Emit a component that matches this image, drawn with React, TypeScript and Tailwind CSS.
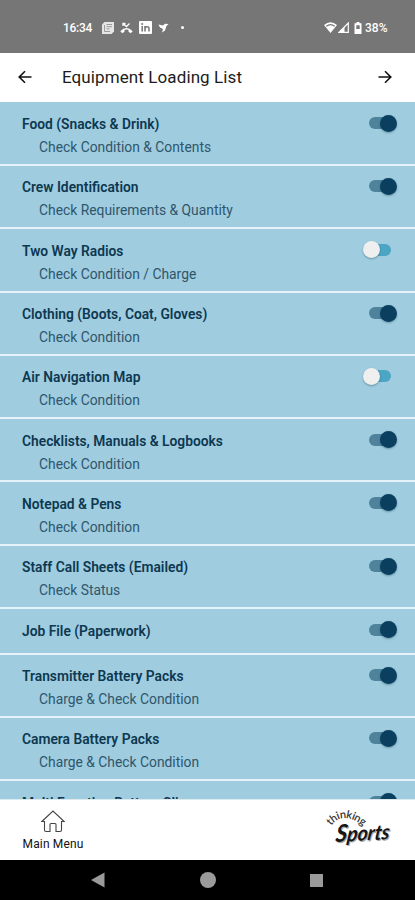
import { clsx } from "clsx";

interface Item {
  title: string;
  note?: string;
  on: boolean;
}

const ITEMS: Item[] = [
  { title: "Food (Snacks & Drink)", note: "Check Condition & Contents", on: true },
  { title: "Crew Identification", note: "Check Requirements & Quantity", on: true },
  { title: "Two Way Radios", note: "Check Condition / Charge", on: false },
  { title: "Clothing (Boots, Coat, Gloves)", note: "Check Condition", on: true },
  { title: "Air Navigation Map", note: "Check Condition", on: false },
  { title: "Checklists, Manuals & Logbooks", note: "Check Condition", on: true },
  { title: "Notepad & Pens", note: "Check Condition", on: true },
  { title: "Staff Call Sheets (Emailed)", note: "Check Status", on: true },
  { title: "Job File (Paperwork)", on: true },
  { title: "Transmitter Battery Packs", note: "Charge & Check Condition", on: true },
  { title: "Camera Battery Packs", note: "Charge & Check Condition", on: true },
  { title: "Multi Function Battery Clips", on: true },
];

function StatusBar() {
  return (
    <div className="flex h-[53px] shrink-0 items-center bg-[#767676] pl-[63px] pr-[26px] pt-[2px] text-[12px] font-medium text-white">
      <span className="w-[29px] tracking-[-0.3px]">16:34</span>
      <svg className="ml-[10px]" width="12" height="12" viewBox="0 0 12 12">
        <path d="M2.500 0H12v9.500L9.500 12H0V2.500Z" fill="#e6e6e6" />
        <path d="M4.500 2.500h5.500M4.500 4.700h5.500M4.500 6.900h3M2.500 3v6.500H8" stroke="#9a9a9a" fill="none" />
      </svg>
      <svg className="ml-[6px]" width="13" height="12" viewBox="0 0 13 12">
        <path d="M3 1.500 6.500 4.500 9.500 1.500M3 4V1.500h2.500" stroke="#fff" strokeWidth="1.300" fill="none" />
        <path d="M.3 9.300Q6.500 2.800 12.700 9.300L10.700 11.200 8.500 9.800V7.800Q6.500 7 4.500 7.800v2L2.300 11.200Z" fill="#fff" />
      </svg>
      <svg className="ml-[6px]" width="13" height="13" viewBox="0 0 13 13">
        <rect width="13" height="13" rx="1" fill="#fff" />
        <path d="M3.200 5v5.500M6 5v5.500M6 7.500C6.500 5 10 5 10 7.500v3" stroke="#767676" strokeWidth="1.500" fill="none" />
        <circle cx="3.200" cy="3" r="1" fill="#767676" />
      </svg>
      <svg className="ml-[6px]" width="11" height="10" viewBox="0 0 11 10">
        <path d="M.5 1.500 5 2.500 7 .8 10.500 1 8.500 3 7 7.500 4 9.500 5 6 2 4.500Z" fill="#fff" />
      </svg>
      <span className="ml-[12px] size-[3px] rounded-full bg-white" />
      <svg className="ml-auto" width="13" height="11" viewBox="0 0 13 11">
        <path d="M0 3Q6.500-2.500 13 3L6.500 11Z" fill="#fff" />
        <path d="M2.300 4.300Q6.500 1 10.700 4.300" stroke="#767676" strokeWidth="1.100" fill="none" />
      </svg>
      <svg className="ml-[1px]" width="11" height="11" viewBox="0 0 11 11">
        <path d="M10.300 1v9.300H1Z" fill="none" stroke="#fff" strokeWidth="1.200" />
        <path d="M6.500 4.700v5.600H1Z" fill="#fff" />
      </svg>
      <svg className="ml-[5px]" width="8" height="12" viewBox="0 0 8 12">
        <path d="M2.500 0h3v1.300H7.500V12H.5V1.300h2Z" fill="#fff" />
        <path d="M2.300 3.300h3.400v3.700H2.300Z" fill="#767676" />
      </svg>
      <span className="ml-[3px] w-[24px] whitespace-nowrap">38%</span>
    </div>
  );
}

function Arrow({ flip = false }: { flip?: boolean }) {
  return (
    <svg className={clsx("-mt-px", flip && "rotate-180")} width="14" height="14" viewBox="0 0 14 14">
      <path d="M13.500 7H1.500M7 1.200 1.200 7 7 12.800" fill="none" stroke="#111" strokeWidth="1.600" />
    </svg>
  );
}

function Toggle({ on }: { on: boolean }) {
  return (
    <span className={clsx("relative flex h-[18px] w-[28px] items-center", on ? "mr-[18px]" : "mr-[24px]")}>
      <span
        className={clsx(
          "absolute h-[12px] w-[22px] rounded-full",
          on ? "left-0 bg-[#4f839c]" : "right-0 bg-[#4ba5c3]",
        )}
      />
      <span
        className={clsx(
          "absolute size-[17px] rounded-full shadow-[0_1px_2px_rgba(0,40,60,0.35)]",
          on ? "right-0 bg-[#0a3f60]" : "left-0 bg-[#efefef]",
        )}
      />
    </span>
  );
}

function Row({ title, note, on }: Item) {
  return (
    <li
      className={clsx(
        "flex shrink-0 items-start justify-between border-b-2 border-[#e6f4f9] pl-[22px] pt-[11.500px]",
        note ? "h-[63.300px]" : "h-[45.500px]",
      )}
    >
      <div className="whitespace-nowrap">
        <p className="text-[13.800px] font-semibold leading-[20px] text-[#0d3850]">{title}</p>
        {note ? (
          <p className="mt-[3px] pl-[17px] text-[13.850px] leading-[20px] text-[#2f566b]">{note}</p>
        ) : null}
      </div>
      <Toggle on={on} />
    </li>
  );
}

function Logo() {
  return (
    <svg width="70" height="42" viewBox="0 0 70 42" className="overflow-visible">
      <path id="arch" d="M6 18Q18 2 38 18" fill="none" />
      <text fontFamily="Lato" fontSize="11" fontWeight="600" fill="#333" textLength="37">
        <textPath href="#arch">thinking</textPath>
      </text>
      <g
        transform="translate(10 34) rotate(-3) skewX(-10)"
        fontFamily="Lato"
        fontStyle="italic"
        fontWeight="700"
        fontSize="21"
      >
        <text x="1.200" y="1.200" fill="#aaa" textLength="54" lengthAdjust="spacingAndGlyphs">
          <tspan fontSize="24">S</tspan>ports
        </text>
        <text fill="#151515" textLength="54" lengthAdjust="spacingAndGlyphs">
          <tspan fontSize="24">S</tspan>ports
        </text>
      </g>
    </svg>
  );
}

export default function App() {
  return (
    <div className="flex h-[900px] w-[415px] flex-col overflow-hidden bg-white font-[Roboto,sans-serif]">
      <StatusBar />
      <header className="flex h-[49px] shrink-0 items-center bg-white pl-[18px] pr-[23px]">
        <Arrow />
        <h1 className="ml-[30px] text-[17px] tracking-[0.1px] text-[#1c1c1c]">Equipment Loading List</h1>
        <span className="ml-auto">
          <Arrow flip />
        </span>
      </header>
      <ul className="flex h-[697px] shrink-0 flex-col overflow-hidden bg-[#9fccdf] pt-[0.700px]">
        {ITEMS.map((item) => (
          <Row key={item.title} {...item} />
        ))}
      </ul>
      <footer className="flex h-[61px] shrink-0 items-start justify-between border-t border-[#dceaf0] pl-[22px] pr-[20px]">
        <div className="flex w-[62px] flex-col items-center pt-[10px]">
          <svg width="24" height="23" viewBox="0 0 24 23" fill="none" stroke="#444" strokeWidth="1.100">
            <path d="M.8 11.500 12 1l11.200 10.500H20.500V20q0 1.500-1.500 1.500h-4V14.500q0-1-1-1h-4q-1 0-1 1v7H5q-1.500 0-1.500-1.500v-8.500Z" />
          </svg>
          <span className="mt-[3px] whitespace-nowrap text-[12px] leading-[16px] tracking-[0.15px] text-[#111]">
            Main Menu
          </span>
        </div>
        <div className="pt-[8px]">
          <Logo />
        </div>
      </footer>
      <nav className="flex h-[40px] shrink-0 items-center justify-between bg-black pl-[91px] pr-[92px]">
        <svg width="14" height="16" viewBox="0 0 14 16" fill="#9a9a9a">
          <path d="M0 8 13.500 .5v15Z" />
        </svg>
        <span className="size-[16px] rounded-full bg-[#9a9a9a]" />
        <span className="size-[13px] bg-[#9a9a9a]" />
      </nav>
    </div>
  );
}
